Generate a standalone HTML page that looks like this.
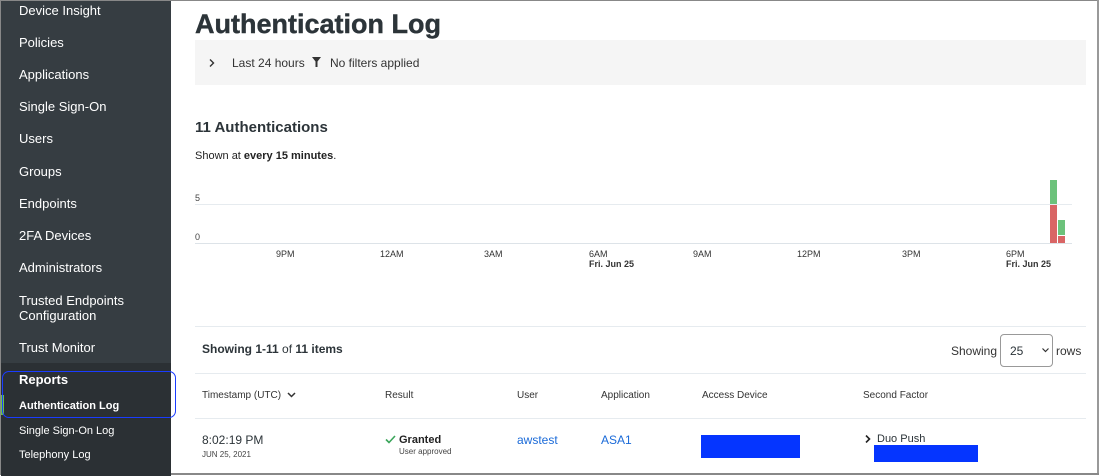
<!DOCTYPE html>
<html><head><style>
*{margin:0;padding:0;box-sizing:border-box}
body{width:1099px;height:475px;overflow:hidden;background:#fff;font-family:"Liberation Sans",Arial,sans-serif;color:#2c3439;position:relative}
.a{position:absolute;white-space:nowrap}
#sb{position:absolute;left:0;top:0;width:171px;height:475px;background:#363d42;border-left:1px solid #888;border-top:1px solid #888}
#sb .a{left:18px;color:#fff;font-size:13px}
#low{position:absolute;left:0;top:362px;width:170px;height:113px;background:#2b3034}
.s{font-size:11px!important}
.h{font-size:12px;color:#333}
.bl{color:#1a6ad8}
.lbl{font-size:9px;color:#444}
.ax{font-size:9px;color:#333;text-align:left}
</style></head><body>
<div style="position:absolute;left:0;top:0;width:1099px;height:1px;background:#888"></div>
<div style="position:absolute;left:1097px;top:0;width:2px;height:475px;background:#999"></div>
<div style="position:absolute;left:0;top:473px;width:1099px;height:2px;background:#888"></div>
<div id="sb">
<div id="low"></div>
<div class="a" style="top:2px">Device Insight</div>
<div class="a" style="top:34px">Policies</div>
<div class="a" style="top:66px">Applications</div>
<div class="a" style="top:98px">Single Sign-On</div>
<div class="a" style="top:130px">Users</div>
<div class="a" style="top:163px">Groups</div>
<div class="a" style="top:195px">Endpoints</div>
<div class="a" style="top:227px">2FA Devices</div>
<div class="a" style="top:259px">Administrators</div>
<div class="a" style="top:292px;line-height:15px">Trusted Endpoints<br>Configuration</div>
<div class="a" style="top:339px">Trust Monitor</div>
<div class="a" style="top:371px;font-weight:bold">Reports</div>
<div style="position:absolute;left:0;top:394px;width:3px;height:20px;background:#6cc04a"></div>
<div class="a s" style="top:399px;font-weight:bold">Authentication Log</div>
<div class="a s" style="top:424px">Single Sign-On Log</div>
<div class="a s" style="top:448px">Telephony Log</div>
<div style="position:absolute;left:1px;top:370px;width:174px;height:47px;border:1.5px solid #1a3cff;border-radius:7px"></div>
</div>
<div class="a" style="left:195px;top:9px;font-size:27px;font-weight:700;color:#2c3439;-webkit-text-stroke:0.4px #2c3439">Authentication Log</div>
<div style="position:absolute;left:195px;top:40px;width:891px;height:45px;background:#f5f5f5"></div>
<svg class="a" style="left:209px;top:59px" width="6" height="8"><path d="M1 0.5L4.5 4L1 7.5" stroke="#333" stroke-width="1.4" fill="none"/></svg>
<div class="a" style="left:232px;top:56px;font-size:12px;color:#333">Last 24 hours</div>
<svg class="a" style="left:312px;top:57px" width="9" height="10"><path d="M0 0H9L5.5 4.5V10H3.5V4.5Z" fill="#333"/></svg>
<div class="a" style="left:330px;top:56px;font-size:12px;color:#333">No filters applied</div>
<div class="a" style="left:195px;top:119px;font-size:15px;font-weight:bold">11 Authentications</div>
<div class="a" style="left:195px;top:150px;font-size:11px;color:#222">Shown at <b>every 15 minutes</b>.</div>
<div class="a lbl" style="left:195px;top:193px">5</div>
<div class="a lbl" style="left:195px;top:232px">0</div>
<div style="position:absolute;left:195px;top:204px;width:877px;height:1px;background:#e6ebef"></div>
<div style="position:absolute;left:195px;top:243px;width:877px;height:1px;background:#dde3e8"></div>
<div style="position:absolute;left:1050px;top:180px;width:7px;height:24px;background:#6cc27b"></div>
<div style="position:absolute;left:1050px;top:205px;width:7px;height:38px;background:#d96565"></div>
<div style="position:absolute;left:1058px;top:220px;width:7px;height:15px;background:#6cc27b"></div>
<div style="position:absolute;left:1058px;top:236px;width:7px;height:7px;background:#d96565"></div>
<div class="a ax" style="left:276px;top:249px">9PM</div>
<div class="a ax" style="left:380px;top:249px">12AM</div>
<div class="a ax" style="left:484px;top:249px">3AM</div>
<div class="a ax" style="left:589px;top:249px;line-height:10px">6AM<br><b>Fri. Jun 25</b></div>
<div class="a ax" style="left:693px;top:249px">9AM</div>
<div class="a ax" style="left:797px;top:249px">12PM</div>
<div class="a ax" style="left:902px;top:249px">3PM</div>
<div class="a ax" style="left:1006px;top:249px;line-height:10px">6PM<br><b>Fri. Jun 25</b></div>
<div style="position:absolute;left:195px;top:326px;width:891px;height:1px;background:#e6ebef"></div>
<div class="a" style="left:202px;top:342px;font-size:12px;font-weight:bold">Showing 1-11 <span style="font-weight:normal">of</span> 11 items</div>
<div class="a" style="left:951px;top:344px;font-size:12px;color:#333">Showing</div>
<div style="position:absolute;left:1000px;top:334px;width:53px;height:33px;border:1px solid #999;border-radius:4px"></div>
<div class="a" style="left:1010px;top:344px;font-size:12px">25</div>
<svg class="a" style="left:1042px;top:348px" width="7" height="5"><path d="M0.5 0.5L3.5 3.5L6.5 0.5" stroke="#333" stroke-width="1.2" fill="none"/></svg>
<div class="a" style="left:1056px;top:344px;font-size:12px;color:#333">rows</div>
<div style="position:absolute;left:195px;top:373px;width:891px;height:1px;background:#e6ebef"></div>
<div class="a h" style="left:202px;top:390px;font-size:10px">Timestamp (UTC)</div>
<svg class="a" style="left:287px;top:392px" width="9" height="6"><path d="M1 1L4.5 4.5L8 1" stroke="#333" stroke-width="1.5" fill="none"/></svg>
<div class="a h" style="left:385px;top:390px;font-size:10px">Result</div>
<div class="a h" style="left:517px;top:390px;font-size:10px">User</div>
<div class="a h" style="left:601px;top:390px;font-size:10px">Application</div>
<div class="a h" style="left:702px;top:390px;font-size:10px">Access Device</div>
<div class="a h" style="left:863px;top:390px;font-size:10px">Second Factor</div>
<div style="position:absolute;left:195px;top:418px;width:891px;height:1px;background:#e6ebef"></div>
<div class="a" style="left:202px;top:433px;font-size:12px">8:02:19 PM</div>
<div class="a" style="left:202px;top:450px;font-size:8px;color:#444">JUN 25, 2021</div>
<svg class="a" style="left:385px;top:435px" width="11" height="9"><path d="M1 4.5L4 7.5L10 1" stroke="#3aa55a" stroke-width="1.6" fill="none"/></svg>
<div class="a" style="left:399px;top:434px;font-size:11px;font-weight:bold;color:#222">Granted</div>
<div class="a" style="left:399px;top:447px;font-size:8px;color:#444">User approved</div>
<div class="a bl" style="left:517px;top:433px;font-size:12px">awstest</div>
<div class="a bl" style="left:601px;top:433px;font-size:12px">ASA1</div>
<div style="position:absolute;left:701px;top:435px;width:99px;height:23px;background:#0535ff"></div>
<svg class="a" style="left:865px;top:435px" width="6" height="8"><path d="M1 0.5L4.5 4L1 7.5" stroke="#222" stroke-width="1.6" fill="none"/></svg>
<div class="a" style="left:877px;top:433px;font-size:11px">Duo Push</div>
<div style="position:absolute;left:874px;top:445px;width:104px;height:17px;background:#0535ff"></div>
</body></html>
